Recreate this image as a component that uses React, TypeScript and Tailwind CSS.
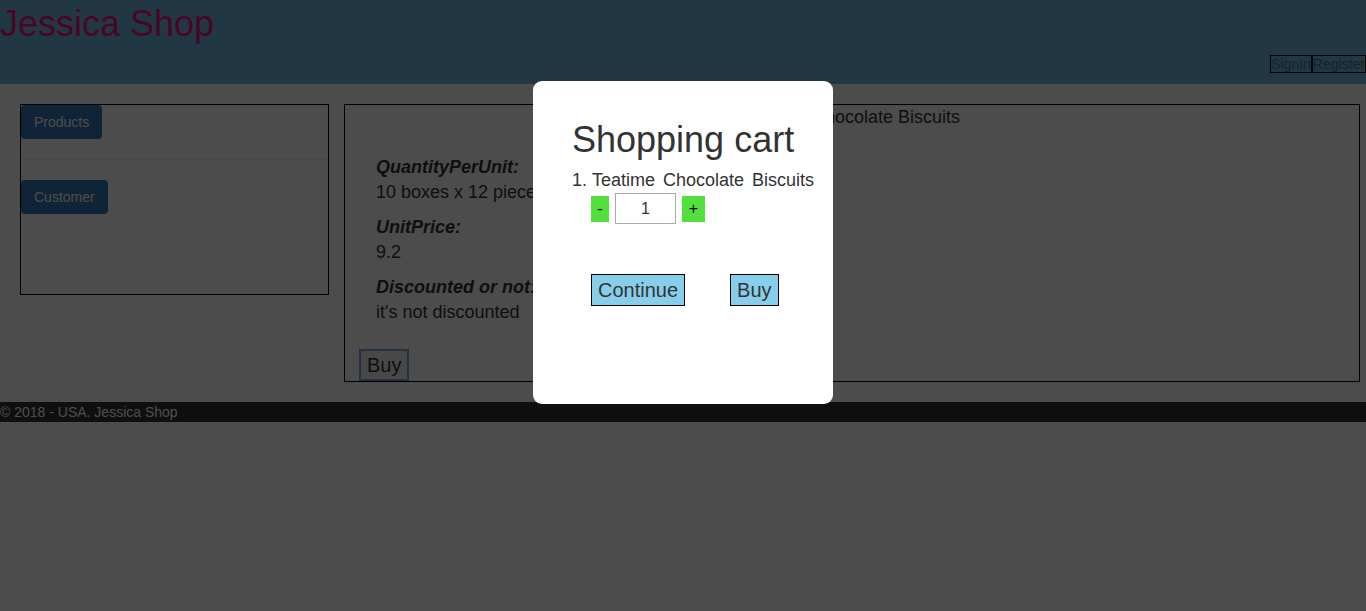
// Jessica Shop – product page with the shopping cart modal open
const font = { fontFamily: '"Liberation Sans", Arial, sans-serif' };

function Header() {
  return (
    <header className="h-[84px] bg-[#72b8e3] flex flex-col justify-between">
      <h1 className="pt-1 text-[36px] leading-[40px] text-[#f0147e] font-normal">Jessica Shop</h1>
      <div className="flex justify-end mb-[11px] text-[14px] leading-[16px]">
        <a className="border border-black text-[#337ab7]">SignIn</a>
        <a className="border border-black text-[#337ab7]">Register</a>
      </div>
    </header>
  );
}

function Sidebar() {
  return (
    <aside className="w-[309px] h-[191px] border border-black shrink-0">
      <button className="h-[34px] px-[13px] rounded bg-[#337ab7] text-white text-[14px] leading-5">Products</button>
      <hr className="my-5 border-t border-[#eee]" />
      <button className="h-[34px] px-[13px] rounded bg-[#337ab7] text-white text-[14px] leading-5">Customer</button>
    </aside>
  );
}

function Detail({ label, value }: { label: string; value: string }) {
  return (
    <div className="mb-[10px]">
      <div className="font-bold italic">{label}</div>
      <div>{value}</div>
    </div>
  );
}

function ProductPanel() {
  return (
    <section className="flex-1 h-[278px] border border-black text-[18px] leading-[25px] text-[#333] flex flex-col">
      <div className="text-center">Teatime Chocolate Biscuits</div>
      <div className="pl-[31px] pt-[25px]">
        <Detail label="QuantityPerUnit:" value="10 boxes x 12 pieces" />
        <Detail label="UnitPrice:" value="9.2" />
        <Detail label="Discounted or not:" value="it's not discounted" />
      </div>
      <div className="mt-auto pl-[14px]">
        <button className="h-[32px] px-[6px] border-2 border-[#7fa6d3] bg-[#f0f0f0] text-[20px] leading-none">Buy</button>
      </div>
    </section>
  );
}

function CartModal() {
  return (
    <div className="fixed inset-0 bg-black/70">
      <div className="absolute left-[533px] top-[81px] w-[300px] h-[323px] bg-white rounded-[9px] pl-[39px] pt-[39px] text-[#333]">
        <h2 className="text-[36px] leading-[40px] mb-[8px]">Shopping cart</h2>
        <div className="text-[18px] leading-[25px]">
          1. <span className="[word-spacing:3px]">Teatime Chocolate Biscuits</span>
        </div>
        <div className="flex items-center gap-[6px] pl-[19px] h-[31px]">
          <button className="h-[26px] w-[18px] bg-[#51e03c] text-black text-[16px] leading-none">-</button>
          <input
            readOnly
            value="1"
            className="w-[61px] h-[31px] border border-[#a9a9a9] text-center text-[16px] text-[#333] outline-none"
          />
          <button className="h-[26px] w-[23px] bg-[#51e03c] text-black text-[16px] leading-none">+</button>
        </div>
        <div className="flex gap-[45px] pl-[19px] mt-[50px]">
          <button className="h-[32px] px-[6px] border border-black bg-[#87ceeb] text-[20px] leading-none">Continue</button>
          <button className="h-[32px] px-[6px] border border-black bg-[#87ceeb] text-[20px] leading-none">Buy</button>
        </div>
      </div>
    </div>
  );
}

export default function App() {
  return (
    <div style={font} className="min-h-[611px] bg-white text-[#333]">
      <Header />
      <div className="flex gap-[15px] pl-5 pr-[6px] pt-5">
        <Sidebar />
        <ProductPanel />
      </div>
      <footer className="mt-5 h-5 bg-[#333] text-white text-[14px] leading-5">© 2018 - USA. Jessica Shop</footer>
      <CartModal />
    </div>
  );
}
